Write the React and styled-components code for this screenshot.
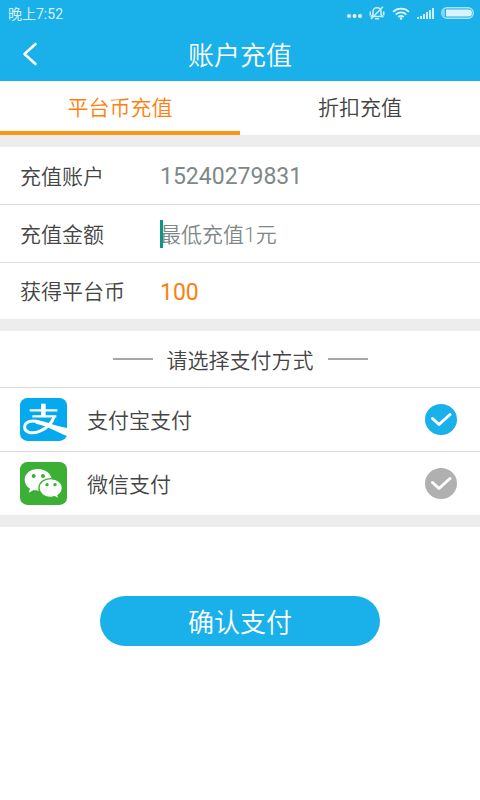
import React, { useState } from "react";
import styled, { createGlobalStyle } from "styled-components";

const blue = "#1ab0ea";
const orange = "#ff7f0e";

const GlobalStyle = createGlobalStyle`
  *, *::before, *::after { box-sizing: border-box; }
  body {
    margin: 0;
    background: #fff;
    color: #444;
    font-family: Roboto, "Noto Sans CJK SC", sans-serif;
    font-size: 21px;
    font-weight: 350;
  }
  button, input {
    font: inherit;
    color: inherit;
    border: 0;
    padding: 0;
    margin: 0;
    background: none;
  }
`;

const Page = styled.main`
  display: flex;
  flex-direction: column;
`;

const Header = styled.header`
  background: ${blue};
  color: #fff;
`;

const StatusBar = styled.div`
  display: flex;
  align-items: center;
  justify-content: space-between;
  height: 26px;
  padding: 0 6px 0 8px;
  font-size: 14px;
  font-weight: 400;
  color: #d6f1fc;
`;

const StatusIcons = styled.div`
  display: flex;
  align-items: center;
  gap: 7px;
  svg { display: block; }
`;

const TitleBar = styled.div`
  display: grid;
  grid-template-columns: 60px 1fr 60px;
  align-items: center;
  height: 55px;
`;

const BackButton = styled.button`
  display: flex;
  align-items: center;
  height: 54px;
  padding-left: 22px;
`;

const Title = styled.h1`
  margin: 0;
  padding-top: 4px;
  font-size: 26px;
  line-height: 52px;
  font-weight: 350;
  text-align: center;
`;

const Tabs = styled.div`
  display: grid;
  grid-template-columns: 1fr 1fr;
`;

const Tab = styled.button`
  height: 54px;
  padding-top: 4px;
  line-height: 46px;
  border-bottom: 4px solid ${(p) => (p.$active ? "#ff9416" : "transparent")};
  color: ${(p) => (p.$active ? orange : "inherit")};
`;

const Section = styled.section`
  border-top: 12px solid #ededed;
`;

const Row = styled.div`
  display: grid;
  grid-template-columns: 140px 1fr;
  align-items: center;
  height: 58px;
  padding: 0 20px;
  border-bottom: 1px solid #dcdcdc;
  &:last-child {
    height: 56px;
    border-bottom: 0;
  }
`;

const RowLabel = styled.label`
  padding-bottom: 2px;
`;

const Value = styled.output`
  padding-top: 2px;
  font-size: 23px;
  font-weight: 400;
  color: ${(p) => (p.$highlight ? orange : "#7e8887")};
`;

const AmountField = styled.div`
  position: relative;
  display: flex;
  align-items: center;
`;

const AmountInput = styled.input`
  width: 100%;
  height: 32px;
  padding-top: 3px;
  outline: none;
  caret-color: transparent;
  &::placeholder { color: #7e8887; opacity: 1; }
`;

const Caret = styled.span`
  position: absolute;
  left: 0;
  width: 3px;
  height: 28px;
  background: #0d9683;
`;

const MethodHeading = styled.h2`
  display: flex;
  align-items: center;
  justify-content: center;
  gap: 14px;
  height: 57px;
  margin: 0;
  font-size: 21px;
  font-weight: 350;
  border-bottom: 1px solid #dcdcdc;
  &::before, &::after {
    content: "";
    width: 40px;
    height: 2px;
    background: #a6a6a6;
  }
`;

const MethodRow = styled.label`
  display: grid;
  grid-template-columns: 47px 1fr 32px;
  column-gap: 20px;
  align-items: center;
  height: 64px;
  padding: 0 23px 0 20px;
  border-bottom: 1px solid #dcdcdc;
  cursor: pointer;
  &:last-child {
    height: 63px;
    border-bottom: 0;
  }
  svg { display: block; }
`;

const MethodName = styled.span`
  padding-bottom: 2px;
`;

const RadioMark = styled.span`
  display: grid;
  width: 32px;
  height: 31px;
  > * { grid-area: 1 / 1; }
  svg { pointer-events: none; }
`;

const Radio = styled.input`
  appearance: none;
  width: 32px;
  height: 31px;
  border-radius: 50%;
  background: #b0b0b0;
  &:checked { background: ${blue}; }
`;

const Footer = styled.footer`
  display: flex;
  justify-content: center;
  padding: 69px 100px 40px;
  border-top: 12px solid #ededed;
`;

const ConfirmButton = styled.button`
  flex: 1;
  height: 50px;
  padding-top: 4px;
  border-radius: 25px;
  background: ${blue};
  color: #fff;
  font-size: 26px;
  line-height: 46px;
`;

function MoreDots() {
  return (
    <svg width="16" height="14" viewBox="0 0 16 14" fill="#e8f7fd" aria-hidden="true">
      <circle cx="3" cy="10" r="2" />
      <circle cx="8.500" cy="10" r="2" />
      <circle cx="14" cy="10" r="2" />
    </svg>
  );
}

function MutedBell() {
  return (
    <svg width="16" height="14" viewBox="0 0 16 14" fill="none" stroke="#c8edfb" strokeWidth="1.600" aria-hidden="true">
      <path d="M2.500 10.500 4 8.500V5.500C4 3.200 5.700 1.700 8 1.700s4 1.500 4 3.800v3l1.500 2z" />
      <path d="M6 12.700h4M1.300 5.500v4M14.700 5.500v4M2 13 14 0.800" />
    </svg>
  );
}

function Wifi() {
  return (
    <svg width="18" height="13" viewBox="0 0 18 13" fill="none" stroke="#e0f5fd" strokeWidth="1.700" aria-hidden="true">
      <path d="M1 4.800a11.500 11.500 0 0 1 16 0M3.700 7.600a7.500 7.500 0 0 1 10.600 0M6.300 10a4 4 0 0 1 5.400 0" />
      <circle cx="9" cy="11.500" r="1.200" fill="#e0f5fd" stroke="none" />
    </svg>
  );
}

function Signal() {
  return (
    <svg width="17" height="12" viewBox="0 0 17 12" fill="#cceefb" aria-hidden="true">
      <path d="M0 10h2v2H0zM3 9h2v3H3zM6 7h2v5H6zM9 5h2v7H9zM12 3h2v9h-2zM15 1h2v11h-2z" />
    </svg>
  );
}

function Battery() {
  return (
    <svg width="33" height="12" viewBox="0 0 33 12" aria-hidden="true">
      <rect x="0.700" y="0.700" width="31.600" height="10.600" rx="5.300" fill="none" stroke="#a9e1f7" strokeWidth="1.400" />
      <path d="M5 2.500h22.500a3.500 3.500 0 0 1 0 7H5z" fill="#d9f3fd" />
      <path d="M4 2.500a3.500 3.500 0 0 0 0 7z" fill="#7fd2f3" />
    </svg>
  );
}

function BackArrow() {
  return (
    <svg width="16" height="24" viewBox="0 0 16 24" fill="none" stroke="#fff" strokeWidth="2.600" strokeLinecap="round" strokeLinejoin="round" aria-hidden="true">
      <path d="M13.500 2 2.500 12l11 10" />
    </svg>
  );
}

function AlipayLogo() {
  return (
    <svg width="47" height="43" viewBox="0 0 141 129" aria-hidden="true">
      <rect width="141" height="129" rx="22" fill="#05a9f0" />
      <g fill="none" stroke="#fff">
        <path d="M70 17v37" strokeWidth="14" />
        <path d="M29 37h83M37 55h72" strokeWidth="7" />
        <path d="M103 54C96 77 77 93 58 100C37 109 14 104 14 88C14 70 36 66 57 72" strokeWidth="9" />
      </g>
      <path d="M46 66C75 68 102 84 141 90V114C111 101 82 84 47 77Z" fill="#fff" />
    </svg>
  );
}

function WechatLogo() {
  return (
    <svg width="47" height="43" viewBox="0 0 141 129" aria-hidden="true">
      <rect width="141" height="129" rx="22" fill="#3cb034" />
      <path d="M54 21C31 21 14 35 14 54c0 11 6 20 16 26l-4 12 15-8c5 1 9 2 15 2 22 0 39-14 39-32S77 21 54 21Z" fill="#fff" />
      <path d="M92 50c-20 0-35 12-35 28s15 28 35 28c4 0 8-1 12-2l13 7-3-11c8-5 13-13 13-22 0-16-15-28-35-28Z" fill="#fff" stroke="#3cb034" strokeWidth="4" />
      <g fill="#3cb034">
        <circle cx="41" cy="42" r="6" />
        <circle cx="69" cy="42" r="6" />
        <circle cx="81" cy="68" r="5" />
        <circle cx="105" cy="68" r="5" />
      </g>
    </svg>
  );
}

function CheckMark() {
  return (
    <svg width="32" height="31" viewBox="0 0 32 31" fill="none" stroke="#fff" strokeWidth="3" strokeLinecap="round" strokeLinejoin="round" aria-hidden="true">
      <path d="M7.500 14.500 14 20.500 25 10.500" />
    </svg>
  );
}

const methods = [
  { id: "alipay", label: "支付宝支付", Logo: AlipayLogo },
  { id: "wechat", label: "微信支付", Logo: WechatLogo },
];

const tabs = ["平台币充值", "折扣充值"];

export default function App() {
  const [tab, setTab] = useState(0);
  const [method, setMethod] = useState("alipay");
  const [amount, setAmount] = useState("");

  return (
    <Page>
      <GlobalStyle />
      <Header>
        <StatusBar>
          <span>晚上7:52</span>
          <StatusIcons>
            <MoreDots />
            <MutedBell />
            <Wifi />
            <Signal />
            <Battery />
          </StatusIcons>
        </StatusBar>
        <TitleBar>
          <BackButton type="button" aria-label="返回">
            <BackArrow />
          </BackButton>
          <Title>账户充值</Title>
        </TitleBar>
      </Header>

      <Tabs role="tablist">
        {tabs.map((name, i) => (
          <Tab key={name} type="button" role="tab" aria-selected={tab === i} $active={tab === i} onClick={() => setTab(i)}>
            {name}
          </Tab>
        ))}
      </Tabs>

      <Section>
        <Row>
          <RowLabel htmlFor="account">充值账户</RowLabel>
          <Value id="account">15240279831</Value>
        </Row>
        <Row>
          <RowLabel htmlFor="amount">充值金额</RowLabel>
          <AmountField>
            <AmountInput
              id="amount"
              inputMode="numeric"
              placeholder="最低充值1元"
              value={amount}
              onChange={(e) => setAmount(e.target.value)}
            />
            {amount === "" && <Caret />}
          </AmountField>
        </Row>
        <Row>
          <RowLabel htmlFor="coins">获得平台币</RowLabel>
          <Value id="coins" $highlight>100</Value>
        </Row>
      </Section>

      <Section>
        <MethodHeading>请选择支付方式</MethodHeading>
        {methods.map(({ id, label, Logo }) => (
          <MethodRow key={id}>
            <Logo />
            <MethodName>{label}</MethodName>
            <RadioMark>
              <Radio type="radio" name="method" value={id} checked={method === id} onChange={() => setMethod(id)} />
              <CheckMark />
            </RadioMark>
          </MethodRow>
        ))}
      </Section>

      <Footer>
        <ConfirmButton type="button">确认支付</ConfirmButton>
      </Footer>
    </Page>
  );
}
